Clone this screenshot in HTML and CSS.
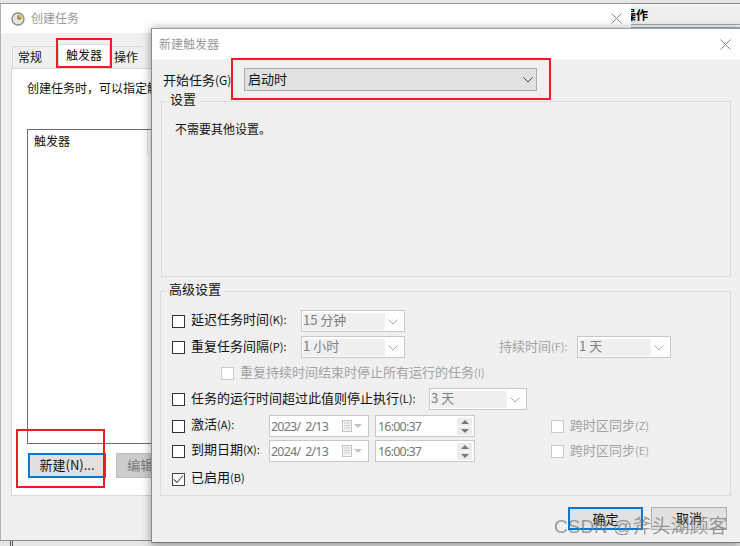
FILE: index.html
```html
<!DOCTYPE html>
<html lang="zh">
<head>
<meta charset="utf-8">
<title>新建触发器</title>
<link rel="stylesheet" href="styles.css">
</head>
<body>
<div class="desktop">
  <div class="behind"><div class="behind-strip"><span class="behind-label">操作</span></div></div>
  <div class="behind-edge"></div>

  <section class="win back">
    <header class="titlebar back-title">
      <svg class="clock" viewBox="0 0 14 14" width="14" height="14"><circle cx="7" cy="7" r="6" fill="#e8e4d8" stroke="#8a8a8a" stroke-width="1.4"/><path d="M7 7V2.600A4.400 4.400 0 0 1 11.400 7Z" fill="#e0b040"/><path d="M7 3.500V7H10" fill="none" stroke="#666" stroke-width="1"/></svg>
      <span class="title-text">创建任务</span>
      <svg class="close" viewBox="0 0 11 11" width="11" height="11"><path d="M.5.5l10 10M10.500.5l-10 10" stroke="#8a8a8a" fill="none"/></svg>
    </header>
    <div class="back-body">
      <div class="tabs">
        <span class="tab t-general">常规</span>
        <span class="tab active">触发器</span>
        <span class="tab t-plain">操作</span>
      </div>
      <div class="panel">
        <p class="panel-text">创建任务时，可以指定触发任务的条件。</p>
        <div class="listbox"><div class="list-head"><span class="list-col">触发器</span></div></div>
        <div class="list-actions">
          <button class="btn primary new-btn">新建(N)...</button>
          <button class="btn disabled-btn">编辑(E)...</button>
        </div>
      </div>
    </div>
  </section>

  <section class="win front">
    <header class="titlebar front-title">
      <span class="title-text">新建触发器</span>
      <svg class="close" viewBox="0 0 11 11" width="11" height="11"><path d="M.5.5l10 10M10.500.5l-10 10" stroke="#8a8a8a" fill="none"/></svg>
    </header>
    <div class="front-body">
      <div class="start-row">
        <label class="start-label">开始任务<small>(G)</small></label>
        <div class="start-select"><span class="start-val">启动时</span>
          <svg viewBox="0 0 10 6" width="10" height="6"><path d="M.5.5L5 5 9.500.5" fill="none" stroke="#444" stroke-width="1"/></svg>
        </div>
      </div>

      <fieldset class="group settings">
        <legend>设置</legend>
        <p class="none-text">不需要其他设置。</p>
      </fieldset>

      <fieldset class="group advanced">
        <legend>高级设置</legend>
        <div class="row r1">
          <span class="check"></span><span class="lab up w-a">延迟任务时间<small>(K):</small></span>
          <div class="combo w104"><span class="combo-val">15 分钟</span><svg class="chev" viewBox="0 0 10 6" width="10" height="6"><path d="M.5.5L5 5 9.500.5" fill="none" stroke="#a8a8a8"/></svg></div>
        </div>
        <div class="row r2">
          <span class="check"></span><span class="lab w-a">重复任务间隔<small>(P):</small></span>
          <div class="combo w104"><span class="combo-val">1 小时</span><svg class="chev" viewBox="0 0 10 6" width="10" height="6"><path d="M.5.5L5 5 9.500.5" fill="none" stroke="#a8a8a8"/></svg></div>
          <span class="lab dis dur">持续时间<small>(F):</small></span>
          <div class="combo w94"><span class="combo-val">1 天</span><svg class="chev" viewBox="0 0 10 6" width="10" height="6"><path d="M.5.5L5 5 9.500.5" fill="none" stroke="#a8a8a8"/></svg></div>
        </div>
        <div class="row r3">
          <span class="check off"></span><span class="lab dis">重复持续时间结束时停止所有运行的任务<small>(I)</small></span>
        </div>
        <div class="row r4">
          <span class="check"></span><span class="lab w-b">任务的运行时间超过此值则停止执行<small>(L):</small></span>
          <div class="combo w98"><span class="combo-val">3 天</span><svg class="chev" viewBox="0 0 10 6" width="10" height="6"><path d="M.5.5L5 5 9.500.5" fill="none" stroke="#a8a8a8"/></svg></div>
        </div>
        <div class="row r5">
          <span class="check"></span><span class="lab up w-c">激活<small>(A):</small></span>
          <div class="date"><span>2023/&nbsp; 2/13</span><svg class="cal" viewBox="0 0 20 12" width="20" height="12"><rect x=".5" y=".5" width="9" height="11" fill="#f4f4f4" stroke="#c4c4c4"/><path d="M2 3h6M2 5.500h6M2 8h6" stroke="#c8c8c8"/><path d="M12 4h8l-4 4z" fill="#c4c4c4"/></svg></div>
          <div class="time"><span>16:00:37</span><span class="spin"><i class="up-btn"></i><i class="down-btn"></i></span></div>
          <span class="check off tz"></span><span class="lab dis">跨时区同步<small>(Z)</small></span>
        </div>
        <div class="row r6">
          <span class="check"></span><span class="lab up w-c">到期日期<small>(X):</small></span>
          <div class="date"><span>2024/&nbsp; 2/13</span><svg class="cal" viewBox="0 0 20 12" width="20" height="12"><rect x=".5" y=".5" width="9" height="11" fill="#f4f4f4" stroke="#c4c4c4"/><path d="M2 3h6M2 5.500h6M2 8h6" stroke="#c8c8c8"/><path d="M12 4h8l-4 4z" fill="#c4c4c4"/></svg></div>
          <div class="time"><span>16:00:37</span><span class="spin"><i class="up-btn"></i><i class="down-btn"></i></span></div>
          <span class="check off tz"></span><span class="lab dis">跨时区同步<small>(E)</small></span>
        </div>
        <div class="row r7">
          <span class="check checked"><svg viewBox="0 0 11 11" width="11" height="11"><path d="M1 5.500L4 8.500 10 1.500" fill="none" stroke="#555" stroke-width="1.100"/></svg></span><span class="lab up">已启用<small>(B)</small></span>
        </div>
      </fieldset>

      <div class="actions">
        <button class="btn primary ok">确定</button>
        <button class="btn cancel">取消</button>
      </div>
    </div>
  </section>

  <div class="floor-bars"></div>
  <div class="mark mark-tab"></div>
  <div class="mark mark-select"></div>
  <div class="mark mark-new"></div>
  <div class="watermark">CSDN @斧头湖顾客</div>
</div>
</body>
</html>
```
FILE: styles.css
```css
* { box-sizing: border-box; }
html, body { margin: 0; padding: 0; }
body { font-family: "Noto Sans CJK SC", "Noto Sans", sans-serif; font-size: 13px; color: #111; }
.desktop { position: relative; width: 740px; height: 546px; overflow: hidden; background: #e6e6e6; }

.behind { position: absolute; left: 600px; top: 3px; width: 140px; height: 25px; background: #f4f4f4; border-top: 1px solid #8a8a8a; padding-top: 3px; }
.behind-strip { height: 18px; background: #efefef; border-bottom: 1px solid #a8a8a8; padding-left: 24px; }
.behind-label { display: block; font-size: 12px; line-height: 15px; font-weight: 700; color: #000; }
.behind-edge { position: absolute; left: 631px; top: 27px; width: 109px; height: 2px; background: #9fb0c6; }

.win { position: absolute; background: #f0f0f0; display: flex; flex-direction: column; }
.back { left: 0; top: 3px; width: 631px; height: 538px; border-top: 1px solid #9a9a9a; border-left: 1px solid #b0b0b0; border-bottom: 1px solid #8a8a8a; }
.front { left: 151px; top: 28px; width: 589px; height: 515px; border-top: 1px solid #9c9c9c; border-left: 1px solid #8c8c8c; border-bottom: 1px solid #777; box-shadow: 0 1px 9px rgba(0,0,0,.42); }

.titlebar { background: #fff; display: flex; align-items: center; flex: none; }
.back-title { height: 29px; padding: 0 9px 0 10px; }
.front-title { height: 30px; padding: 0 9px 0 7px; }
.title-text { color: #9a9a9a; font-size: 12px; flex: 1; padding-bottom: 2px; }
.clock { margin-right: 6px; }

.back-body { flex: 1; padding: 11px 10px 0 10px; }
.tabs { display: flex; height: 24px; align-items: flex-end; padding-left: 1px; }
.tab { height: 22px; line-height: 19px; font-size: 12px; border: 1px solid #d9d9d9; border-bottom: 0; background: #f0f0f0; }
.t-general { width: 46px; padding-left: 5px; }
.tab.active { height: 24px; width: 52px; background: #fff; text-align: center; }
.tab.t-plain { width: 32px; padding-left: 4px; border-width: 1px 0 0 0; }
.panel { background: #fff; border: 1px solid #d9d9d9; height: 428px; padding: 10px 15px 0; }
.panel-text { margin: 0; line-height: 18px; font-size: 12px; white-space: nowrap; }
.listbox { margin-top: 32px; height: 315px; border: 1px solid #6e6e6e; background: #fff; }
.list-head { height: 24px; }
.list-col { display: block; width: 120px; height: 24px; line-height: 21px; font-size: 12px; padding-left: 6px; border-right: 1px solid #e4e4e4; }
.list-actions { display: flex; gap: 10px; margin-top: 9px; padding-left: 1px; }

.btn { font: inherit; font-size: 13px; height: 25px; padding: 0 0 3px; color: #111; background: #e1e1e1; border: 1px solid #adadad; }
.btn.primary { border: 2px solid #0078d7; }
.new-btn { width: 78px; }
.disabled-btn { width: 76px; background: #ccc; border-color: #bfbfbf; color: #7a7a7a; }

.front-body { flex: 1; padding: 0 8px; display: flex; flex-direction: column; }
.start-row { display: flex; align-items: center; height: 23px; margin-top: 9px; padding-left: 3px; }
.start-label { width: 81px; white-space: nowrap; padding-bottom: 1px; }
.start-label small { font-size: 12px; }
.start-select { width: 293px; height: 23px; display: flex; align-items: center; justify-content: space-between; padding: 0 3px; background: #e1e1e1; border: 1px solid #adadad; }
.start-val { padding-bottom: 3px; }

.group { margin: 0; padding: 0; border: 1px solid #dcdcdc; min-width: 0; }
.group legend { padding: 0 3px 4px; margin-left: 5px; line-height: 14px; font-size: 13px; }
.settings { margin: 1px 0 0 1px; width: 570px; height: 185px; flex: none; }
.none-text { margin: 10px 0 0 13px; line-height: 18px; font-size: 12px; }
.advanced { margin: 5px 0 0 0; width: 571px; height: 214px; flex: none; }

.row { display: flex; align-items: center; padding-left: 11px; white-space: nowrap; height: 22px; }
.r1 { margin-top: 10px; }
.r2, .r3, .r4 { margin-top: 4px; }
.r3 { padding-left: 60px; }
.r5 { margin-top: 5px; }
.r6 { margin-top: 3px; }
.r7 { margin-top: 6px; }

.check { flex: none; width: 13px; height: 13px; border: 1px solid #333; background: #fff; margin-right: 6px; display: flex; align-items: center; justify-content: center; }
.check.off { border-color: #ccc; }
.check.checked { border-color: #444; }
.check svg { display: block; }
.tz { margin-left: 76px; }

.lab { display: inline-block; font-size: 13px; margin-bottom: 3px; }
.lab.up { margin-bottom: 6px; }
.lab small { font-size: 11px; }
.dis { color: #a2a2a2; }
.w-a { width: 110px; }
.w-b { width: 238px; }
.w-c { width: 78px; }
.dur { width: 78px; margin-left: 94px; }

.combo { height: 22px; border: 1px solid #c8c8c8; background: #fff; padding: 2px 1px; display: flex; align-items: center; position: relative; color: #808080; font-size: 13px; flex: none; }
.combo-val { flex: 1; background: #f0f0f0; height: 17px; line-height: 14px; margin-right: 18px; }
.chev { position: absolute; right: 6px; top: 8px; }
.w104 { width: 104px; }
.w94 { width: 94px; }
.w98 { width: 98px; }

.date, .time { height: 22px; border: 1px solid #c8c8c8; background: #fff; display: flex; align-items: center; justify-content: space-between; color: #777; font-family: "Noto Sans", sans-serif; font-size: 12.5px; letter-spacing: -.8px; padding: 0 2px 0 1px; flex: none; }
.date { width: 100px; padding-right: 6px; }
.time { width: 100px; margin-left: 6px; padding-left: 2px; }
.spin { display: flex; flex-direction: column; gap: 1px; width: 15px; }
.spin i { display: block; height: 8px; background: #ececec; position: relative; }
.spin i::after { content: ""; position: absolute; left: 4px; border-left: 4px solid transparent; border-right: 4px solid transparent; }
.spin .up-btn::after { top: 2px; border-bottom: 4px solid #777; }
.spin .down-btn::after { top: 2px; border-top: 4px solid #777; }

.actions { display: flex; gap: 8px; justify-content: flex-end; padding-right: 5px; margin-top: 11px; }
.ok { width: 75px; height: 23px; }
.cancel { width: 76px; height: 23px; }

.floor-bars { position: absolute; left: 10px; top: 541px; width: 3px; height: 5px; border-left: 1px solid #555; border-right: 1px solid #555; }

.mark { position: absolute; border: 2px solid #ed1c24; pointer-events: none; }
.mark-tab { left: 56px; top: 38px; width: 56px; height: 30px; }
.mark-select { left: 231px; top: 58px; width: 320px; height: 42px; }
.mark-new { left: 16px; top: 429px; width: 89px; height: 59px; }

.watermark { position: absolute; left: 554px; top: 513px; font-family: "Liberation Sans", "Noto Sans CJK SC", sans-serif; font-size: 19px; line-height: 28px; color: rgba(120,120,120,.72); white-space: nowrap; }
```
